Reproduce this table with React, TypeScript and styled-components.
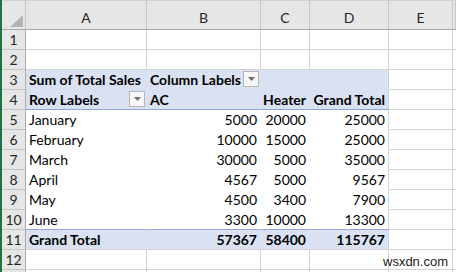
import styled, { createGlobalStyle } from 'styled-components';

const GlobalStyle = createGlobalStyle`
  html, body {
    margin: 0;
    padding: 0;
    background: #ffffff;
    overflow: hidden;
  }
  body {
    font-family: Lato, "Liberation Sans", sans-serif;
    color: #000;
  }
`;

const COLS = '24px 121px 114px 49px 79px 64px 1fr';
const GRID = '#d4d4d4';
const HEAD_LINE = '#c6c6c6';
const BAND = '#d9e1f2';
const BLUE = '#8ea9db';

const Sheet = styled.div`
  position: relative;
  width: 456px;
  height: 272px;
  border-left: 2px solid #217346;
  box-sizing: border-box;
  overflow: hidden;
`;

const HeaderRow = styled.div`
  display: grid;
  grid-template-columns: ${COLS};
  height: 30px;
  background: #e6e6e6;
  border-top: 1px solid #d0d0d0;
  box-sizing: border-box;
  border-bottom: 1px solid #ababab;
`;

const Corner = styled.div`
  position: relative;
  border-right: 1px solid ${HEAD_LINE};
  display: flex;
  align-items: flex-end;
  justify-content: flex-end;
  padding: 0 2px 2px 0;
`;

const ColHeader = styled.div`
  border-right: 1px solid ${HEAD_LINE};
  display: flex;
  align-items: center;
  justify-content: center;
  padding-top: 4px;
  font-size: 14px;
  color: #262626;
`;

const Row = styled.div`
  display: grid;
  grid-template-columns: ${COLS};
  height: 20px;
`;

const RowHeader = styled.div`
  background: #e6e6e6;
  border-right: 1px solid #ababab;
  border-bottom: 1px solid ${HEAD_LINE};
  display: flex;
  align-items: flex-end;
  justify-content: center;
  padding-bottom: 1px;
  font-size: 14px;
  color: #262626;
  box-sizing: border-box;
`;

type CellProps = {
  $align?: 'left' | 'right';
  $bold?: boolean;
  $pivot?: boolean;
  $band?: boolean;
  $edge?: boolean;
  $blueBottom?: boolean;
  $openBottom?: boolean;
};

const Cell = styled.div<CellProps>`
  box-sizing: border-box;
  display: flex;
  align-items: flex-end;
  justify-content: ${(p) => (p.$align === 'right' ? 'flex-end' : 'space-between')};
  padding: 0 3px 1px 3px;
  font-size: 14px;
  font-weight: ${(p) => (p.$bold ? 700 : 400)};
  white-space: nowrap;
  overflow: visible;
  background: ${(p) => (p.$band ? BAND : '#ffffff')};
  border-right: 1px solid
    ${(p) => (p.$pivot && !p.$edge ? (p.$band ? BAND : '#ffffff') : GRID)};
  border-bottom: 1px solid
    ${(p) =>
      p.$blueBottom ? BLUE : p.$openBottom ? (p.$band ? BAND : '#ffffff') : GRID};
`;

const FilterButton = styled.span`
  width: 14px;
  height: 14px;
  margin-bottom: 1px;
  margin-right: -2px;
  border: 1px solid #b7b7b7;
  background: #f7f7f7;
  display: inline-flex;
  align-items: center;
  justify-content: center;
  flex: none;
`;

const Watermark = styled.div`
  position: absolute;
  left: 381px;
  top: 254px;
  font-family: "Liberation Sans", Arial, sans-serif;
  font-size: 13px;
  color: #1a1a1a;
`;

const Filter = () => (
  <FilterButton>
    <svg width="7" height="4" viewBox="0 0 7 4">
      <path d="M0 0 H7 L3.5 4 Z" fill="#6d6d6d" />
    </svg>
  </FilterButton>
);

const months = [
  ['January', 5000, 20000, 25000],
  ['February', 10000, 15000, 25000],
  ['March', 30000, 5000, 35000],
  ['April', 4567, 5000, 9567],
  ['May', 4500, 3400, 7900],
  ['June', 3300, 10000, 13300],
] as const;

const Blank = ({ n }: { n: number }) => (
  <>
    {Array.from({ length: n }).map((_, i) => (
      <Cell key={i} />
    ))}
  </>
);

export default function App() {
  return (
    <Sheet>
      <GlobalStyle />
      <HeaderRow>
        <Corner>
          <svg width="13" height="12" viewBox="0 0 13 12">
            <path d="M13 0 V12 H0 Z" fill="#b4b4b4" />
          </svg>
        </Corner>
        {['A', 'B', 'C', 'D', 'E', ''].map((c) => (
          <ColHeader key={c}>{c}</ColHeader>
        ))}
      </HeaderRow>

      <Row>
        <RowHeader>1</RowHeader>
        <Blank n={6} />
      </Row>
      <Row>
        <RowHeader>2</RowHeader>
        <Blank n={6} />
      </Row>

      <Row>
        <RowHeader>3</RowHeader>
        <Cell $pivot $band $bold $openBottom>Sum of Total Sales</Cell>
        <Cell $pivot $band $bold $openBottom>
          Column Labels
          <Filter />
        </Cell>
        <Cell $pivot $band $openBottom />
        <Cell $pivot $band $edge $openBottom />
        <Blank n={2} />
      </Row>

      <Row>
        <RowHeader>4</RowHeader>
        <Cell $pivot $band $bold $blueBottom>
          Row Labels
          <Filter />
        </Cell>
        <Cell $pivot $band $bold $blueBottom>AC</Cell>
        <Cell $pivot $band $bold $blueBottom $align="right">Heater</Cell>
        <Cell $pivot $band $bold $blueBottom $edge $align="right">Grand Total</Cell>
        <Blank n={2} />
      </Row>

      {months.map(([m, ac, heater, total], i) => {
        const last = i === months.length - 1;
        return (
          <Row key={m}>
            <RowHeader>{i + 5}</RowHeader>
            <Cell $pivot $openBottom={!last} $blueBottom={last}>{m}</Cell>
            <Cell $pivot $openBottom={!last} $blueBottom={last} $align="right">{ac}</Cell>
            <Cell $pivot $openBottom={!last} $blueBottom={last} $align="right">{heater}</Cell>
            <Cell $pivot $openBottom={!last} $blueBottom={last} $edge $align="right">{total}</Cell>
            <Blank n={2} />
          </Row>
        );
      })}

      <Row>
        <RowHeader>11</RowHeader>
        <Cell $pivot $band $bold>Grand Total</Cell>
        <Cell $pivot $band $bold $align="right">57367</Cell>
        <Cell $pivot $band $bold $align="right">58400</Cell>
        <Cell $pivot $band $bold $edge $align="right">115767</Cell>
        <Blank n={2} />
      </Row>
      <Row>
        <RowHeader>12</RowHeader>
        <Blank n={6} />
      </Row>
      <Row>
        <RowHeader />
        <Blank n={6} />
      </Row>

      <Watermark>wsxdn.com</Watermark>
    </Sheet>
  );
}
